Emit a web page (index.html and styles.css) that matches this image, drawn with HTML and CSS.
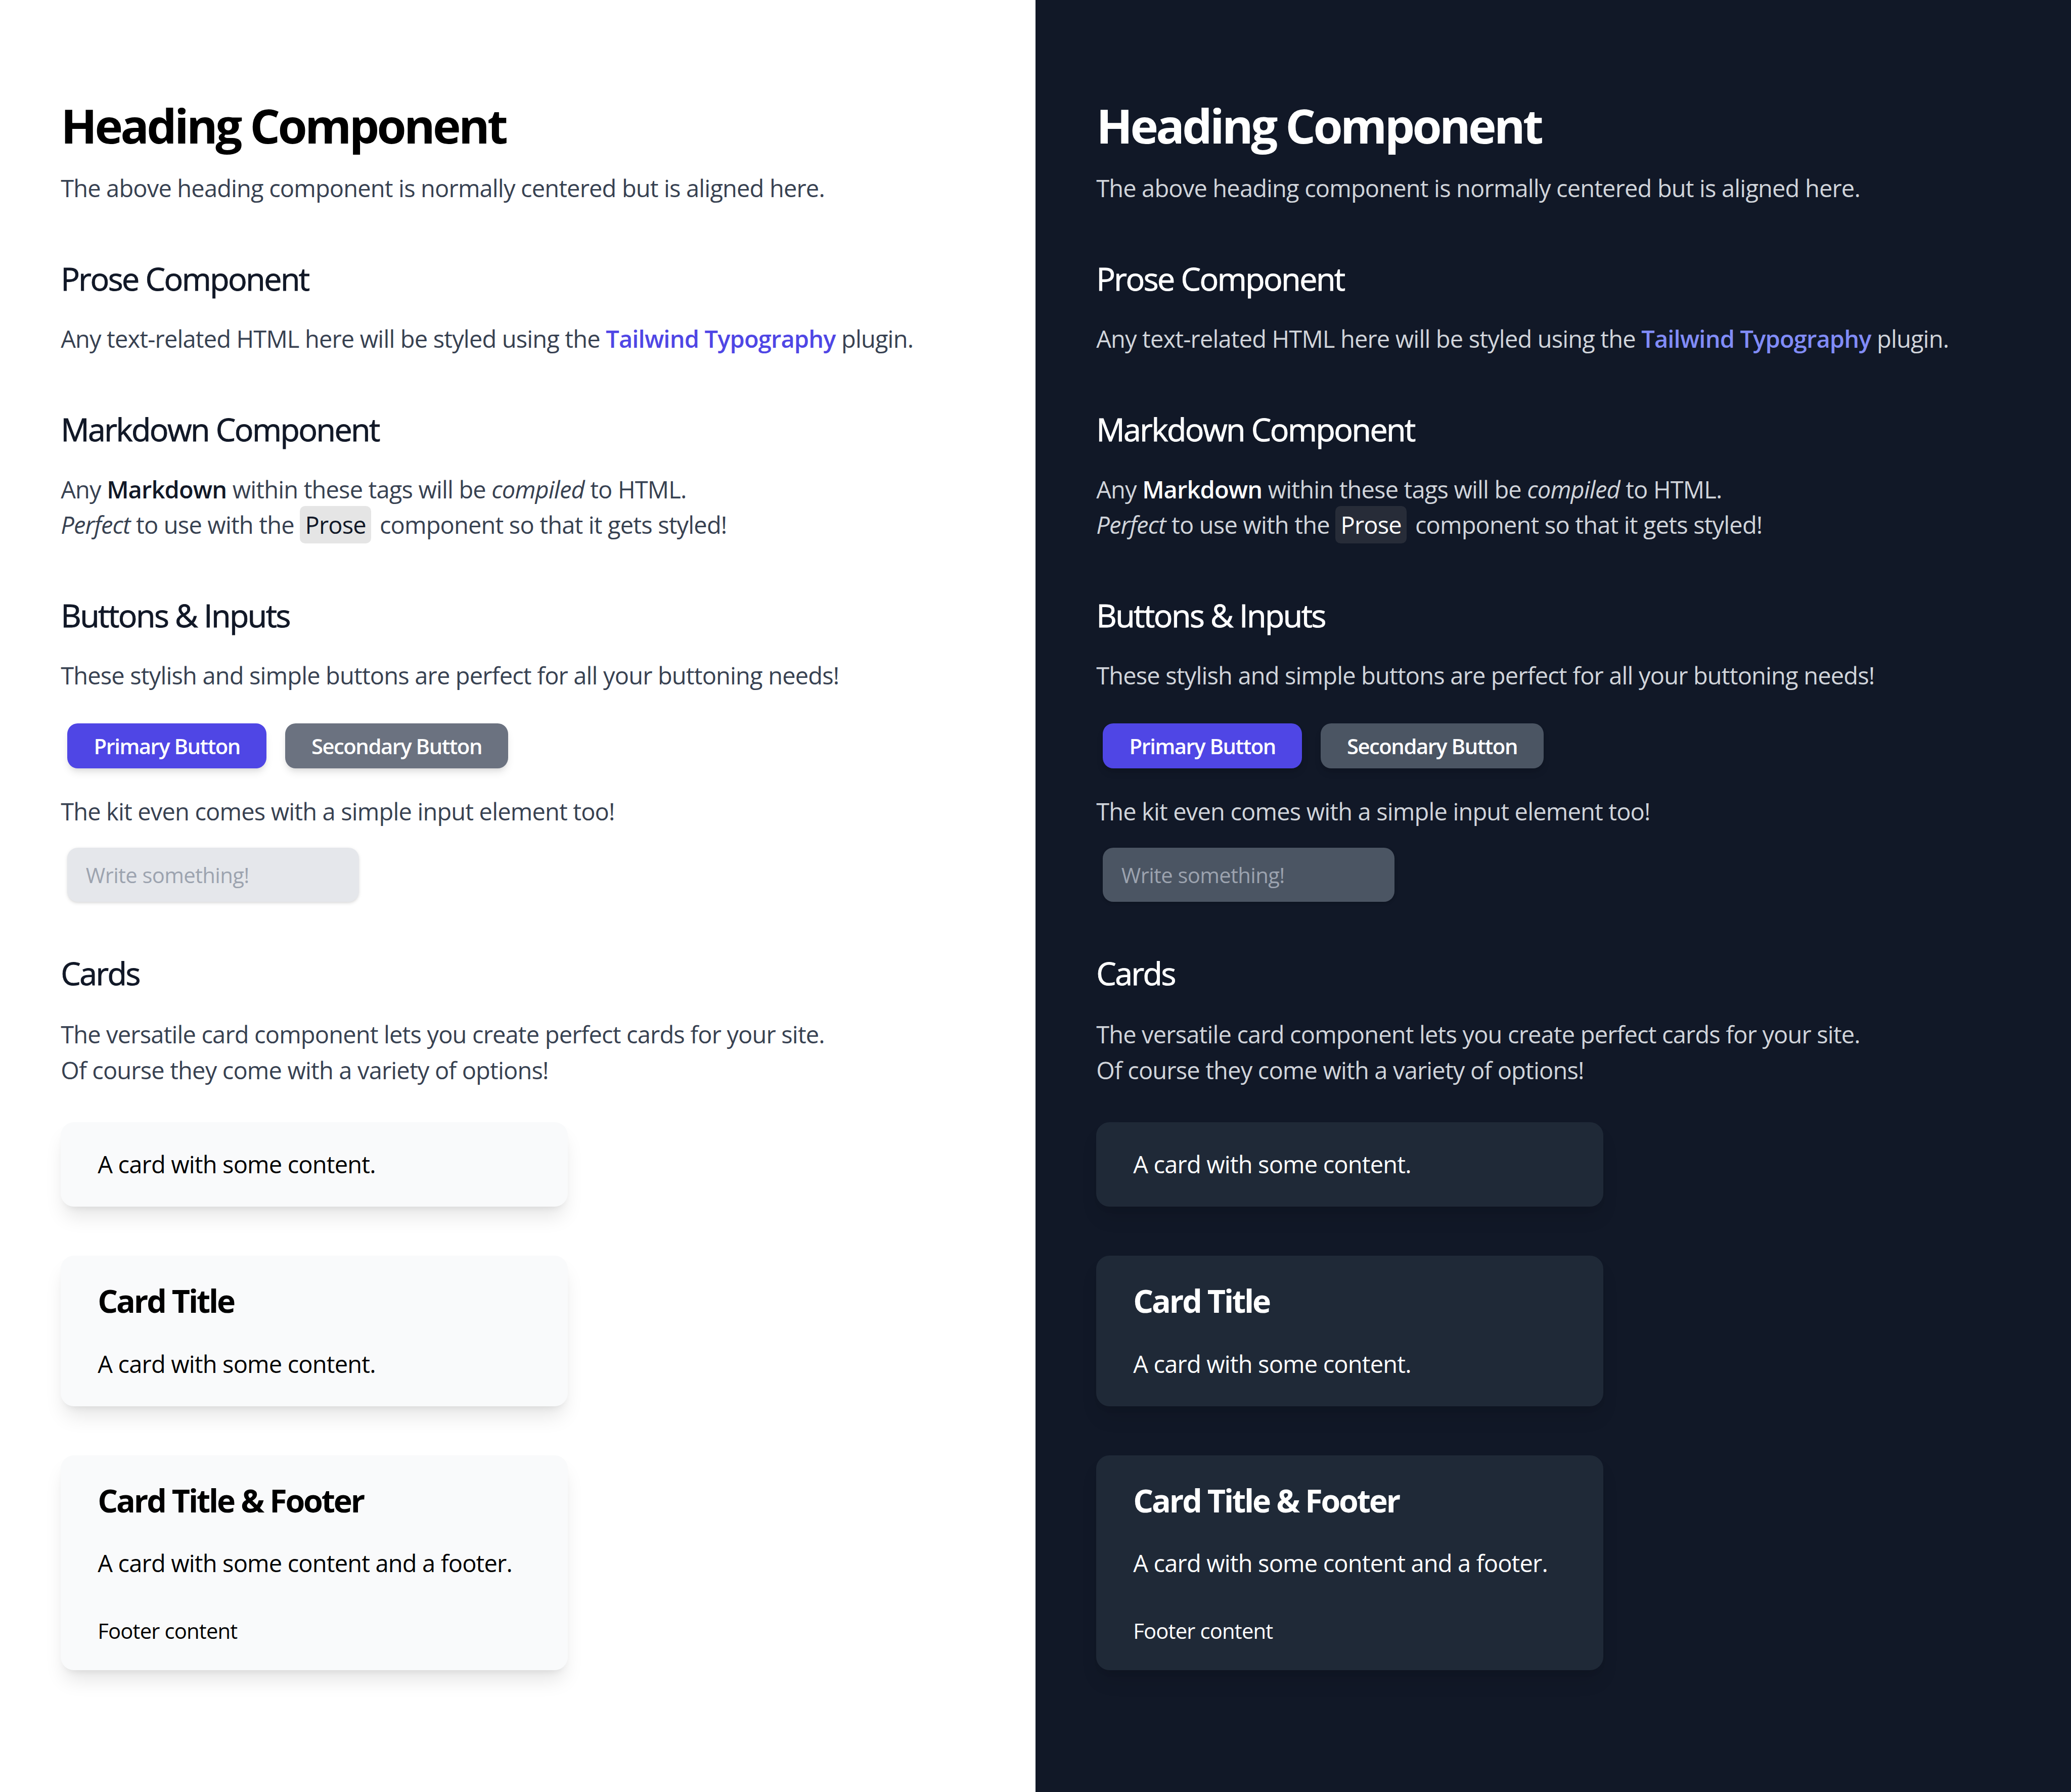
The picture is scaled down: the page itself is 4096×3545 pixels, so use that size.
FILE: index.html
```html
<!DOCTYPE html>
<html lang="en">
<head>
<meta charset="utf-8">
<title>Components</title>
<link rel="stylesheet" href="styles.css">
</head>
<body>
<div class="split">
  <main class="pane light">
    <h1 class="title">Heading Component</h1>
    <p class="lead">The above heading component is normally centered but is aligned here.</p>

    <section class="section">
      <h2>Prose Component</h2>
      <p>Any text-related HTML here will be styled using the <a href="#" class="link">Tailwind Typography</a> plugin.</p>
    </section>

    <section class="section">
      <h2>Markdown Component</h2>
      <p>Any <strong>Markdown</strong> within these tags will be <em>compiled</em> to HTML.<br><em>Perfect</em> to use with the <code class="chip">Prose</code> component so that it gets styled!</p>
    </section>

    <section class="section">
      <h2>Buttons &amp; Inputs</h2>
      <p>These stylish and simple buttons are perfect for all your buttoning needs!</p>
      <div class="btn-row">
        <button class="btn btn-primary">Primary Button</button>
        <button class="btn btn-secondary">Secondary Button</button>
      </div>
      <p class="after-btns">The kit even comes with a simple input element too!</p>
      <input class="field" type="text" placeholder="Write something!">
    </section>

    <section class="section cards-section">
      <h2>Cards</h2>
      <p>The versatile card component lets you create perfect cards for your site.<br>Of course they come with a variety of options!</p>
      <div class="cards">
        <div class="card"><p class="card-text">A card with some content.</p></div>
        <div class="card"><h3 class="card-title">Card Title</h3><p class="card-text">A card with some content.</p></div>
        <div class="card"><h3 class="card-title">Card Title &amp; Footer</h3><p class="card-text">A card with some content and a footer.</p><div class="card-footer">Footer content</div></div>
      </div>
    </section>
  </main>

  <main class="pane dark">
    <h1 class="title">Heading Component</h1>
    <p class="lead">The above heading component is normally centered but is aligned here.</p>

    <section class="section">
      <h2>Prose Component</h2>
      <p>Any text-related HTML here will be styled using the <a href="#" class="link">Tailwind Typography</a> plugin.</p>
    </section>

    <section class="section">
      <h2>Markdown Component</h2>
      <p>Any <strong>Markdown</strong> within these tags will be <em>compiled</em> to HTML.<br><em>Perfect</em> to use with the <code class="chip">Prose</code> component so that it gets styled!</p>
    </section>

    <section class="section">
      <h2>Buttons &amp; Inputs</h2>
      <p>These stylish and simple buttons are perfect for all your buttoning needs!</p>
      <div class="btn-row">
        <button class="btn btn-primary">Primary Button</button>
        <button class="btn btn-secondary">Secondary Button</button>
      </div>
      <p class="after-btns">The kit even comes with a simple input element too!</p>
      <input class="field" type="text" placeholder="Write something!">
    </section>

    <section class="section cards-section">
      <h2>Cards</h2>
      <p>The versatile card component lets you create perfect cards for your site.<br>Of course they come with a variety of options!</p>
      <div class="cards">
        <div class="card"><p class="card-text">A card with some content.</p></div>
        <div class="card"><h3 class="card-title">Card Title</h3><p class="card-text">A card with some content.</p></div>
        <div class="card"><h3 class="card-title">Card Title &amp; Footer</h3><p class="card-text">A card with some content and a footer.</p><div class="card-footer">Footer content</div></div>
      </div>
    </section>
  </main>
</div>
</body>
</html>
```

FILE: styles.css
```css
html {
  zoom: 2.6122;
}

body {
  margin: 0;
  font-family: "Open Sans", "Noto Sans", sans-serif;
  letter-spacing: -0.02em;
}

.split {
  display: grid;
  grid-template-columns: 1fr 1fr;
  min-height: 1357px;
}

.pane {
  padding: 75px 46px 0;
  box-sizing: border-box;
}

.light { background: #ffffff; color: #374151; }
.dark { background: #111827; color: #d1d5db; }

.title {
  margin: 0;
  font-size: 36px;
  line-height: 40px;
  font-weight: 700;
  letter-spacing: -0.05em;
}
.light .title { color: #000000; }
.dark .title { color: #ffffff; }

.lead {
  margin: 14px 0 0;
  font-size: 18px;
  line-height: 27px;
}

.section {
  margin-top: 39px;
}

.section h2 {
  margin: 0 0 16px;
  font-size: 24px;
  line-height: 32px;
  font-weight: 400;
  letter-spacing: -0.04em;
  -webkit-text-stroke: 0.35px currentColor;
}
.light .section h2 { color: #111827; }
.dark .section h2 { color: #ffffff; }

.section p {
  margin: 0;
  font-size: 18px;
  line-height: 27px;
}

.link {
  text-decoration: none;
  font-weight: 600;
}
.light .link { color: #4f46e5; }
.dark .link { color: #818cf8; }

.light strong { color: #111827; font-weight: 600; }
.dark strong { color: #ffffff; font-weight: 600; }

.chip {
  font-family: inherit;
  font-size: 18px;
  padding: 2px 4px;
  margin-right: 2px;
  border-radius: 4px;
}
.light .chip { background: #e5e5e5; color: #111827; }
.dark .chip { background: #272c38; color: #ffffff; }

.btn-row {
  display: flex;
  gap: 14px;
  margin: 23px 0 0 5px;
}

.btn {
  height: 34px;
  padding: 0 20px;
  border: none;
  border-radius: 8px;
  font-family: inherit;
  font-size: 16px;
  font-weight: 600;
  letter-spacing: -0.035em;
  color: #ffffff;
  box-shadow: 0 4px 6px -1px rgba(0,0,0,0.1), 0 2px 4px -2px rgba(0,0,0,0.1);
}
.btn-primary { background: #4f46e5; }
.light .btn-secondary { background: #6b7280; }
.dark .btn-secondary { background: #4b5563; }

.section p.after-btns {
  margin-top: 19px;
}

.field {
  display: block;
  box-sizing: border-box;
  width: 221px;
  height: 41px;
  margin: 14px 0 0 5px;
  padding: 0 14px;
  border: none;
  border-radius: 8px;
  font-family: inherit;
  font-size: 16px;
  letter-spacing: -0.015em;
  outline: none;
  box-shadow: 0 1px 3px 0 rgba(0,0,0,0.1), 0 1px 2px -1px rgba(0,0,0,0.1);
}
.field::placeholder { color: #9ca3af; opacity: 1; }
.light .field { background: #e5e7eb; }
.dark .field { background: #4b5563; }

.cards-section {
  margin-top: 38px;
}

.section.cards-section h2 {
  margin-bottom: 17px;
}

.cards {
  display: flex;
  flex-direction: column;
  gap: 37px;
  margin-top: 26px;
}

.card {
  width: 384px;
  box-sizing: border-box;
  padding: 18px 28px;
  border-radius: 10px;
  display: flex;
  flex-direction: column;
  gap: 18px;
}
.light .card {
  background: #f9fafb;
  color: #000000;
  box-shadow: 0 10px 15px -3px rgba(0,0,0,0.1), 0 4px 6px -4px rgba(0,0,0,0.1);
}
.dark .card {
  background: #1f2937;
  color: #ffffff;
  box-shadow: 0 10px 15px -3px rgba(0,0,0,0.1), 0 4px 6px -4px rgba(0,0,0,0.1);
}

.card-title {
  margin: 0;
  font-size: 24px;
  line-height: 32px;
  font-weight: 700;
  letter-spacing: -0.05em;
}

.section .card-text {
  font-size: 18px;
  line-height: 28px;
}

.card-footer {
  margin-top: 7px;
  font-size: 16px;
  line-height: 24px;
}
```
